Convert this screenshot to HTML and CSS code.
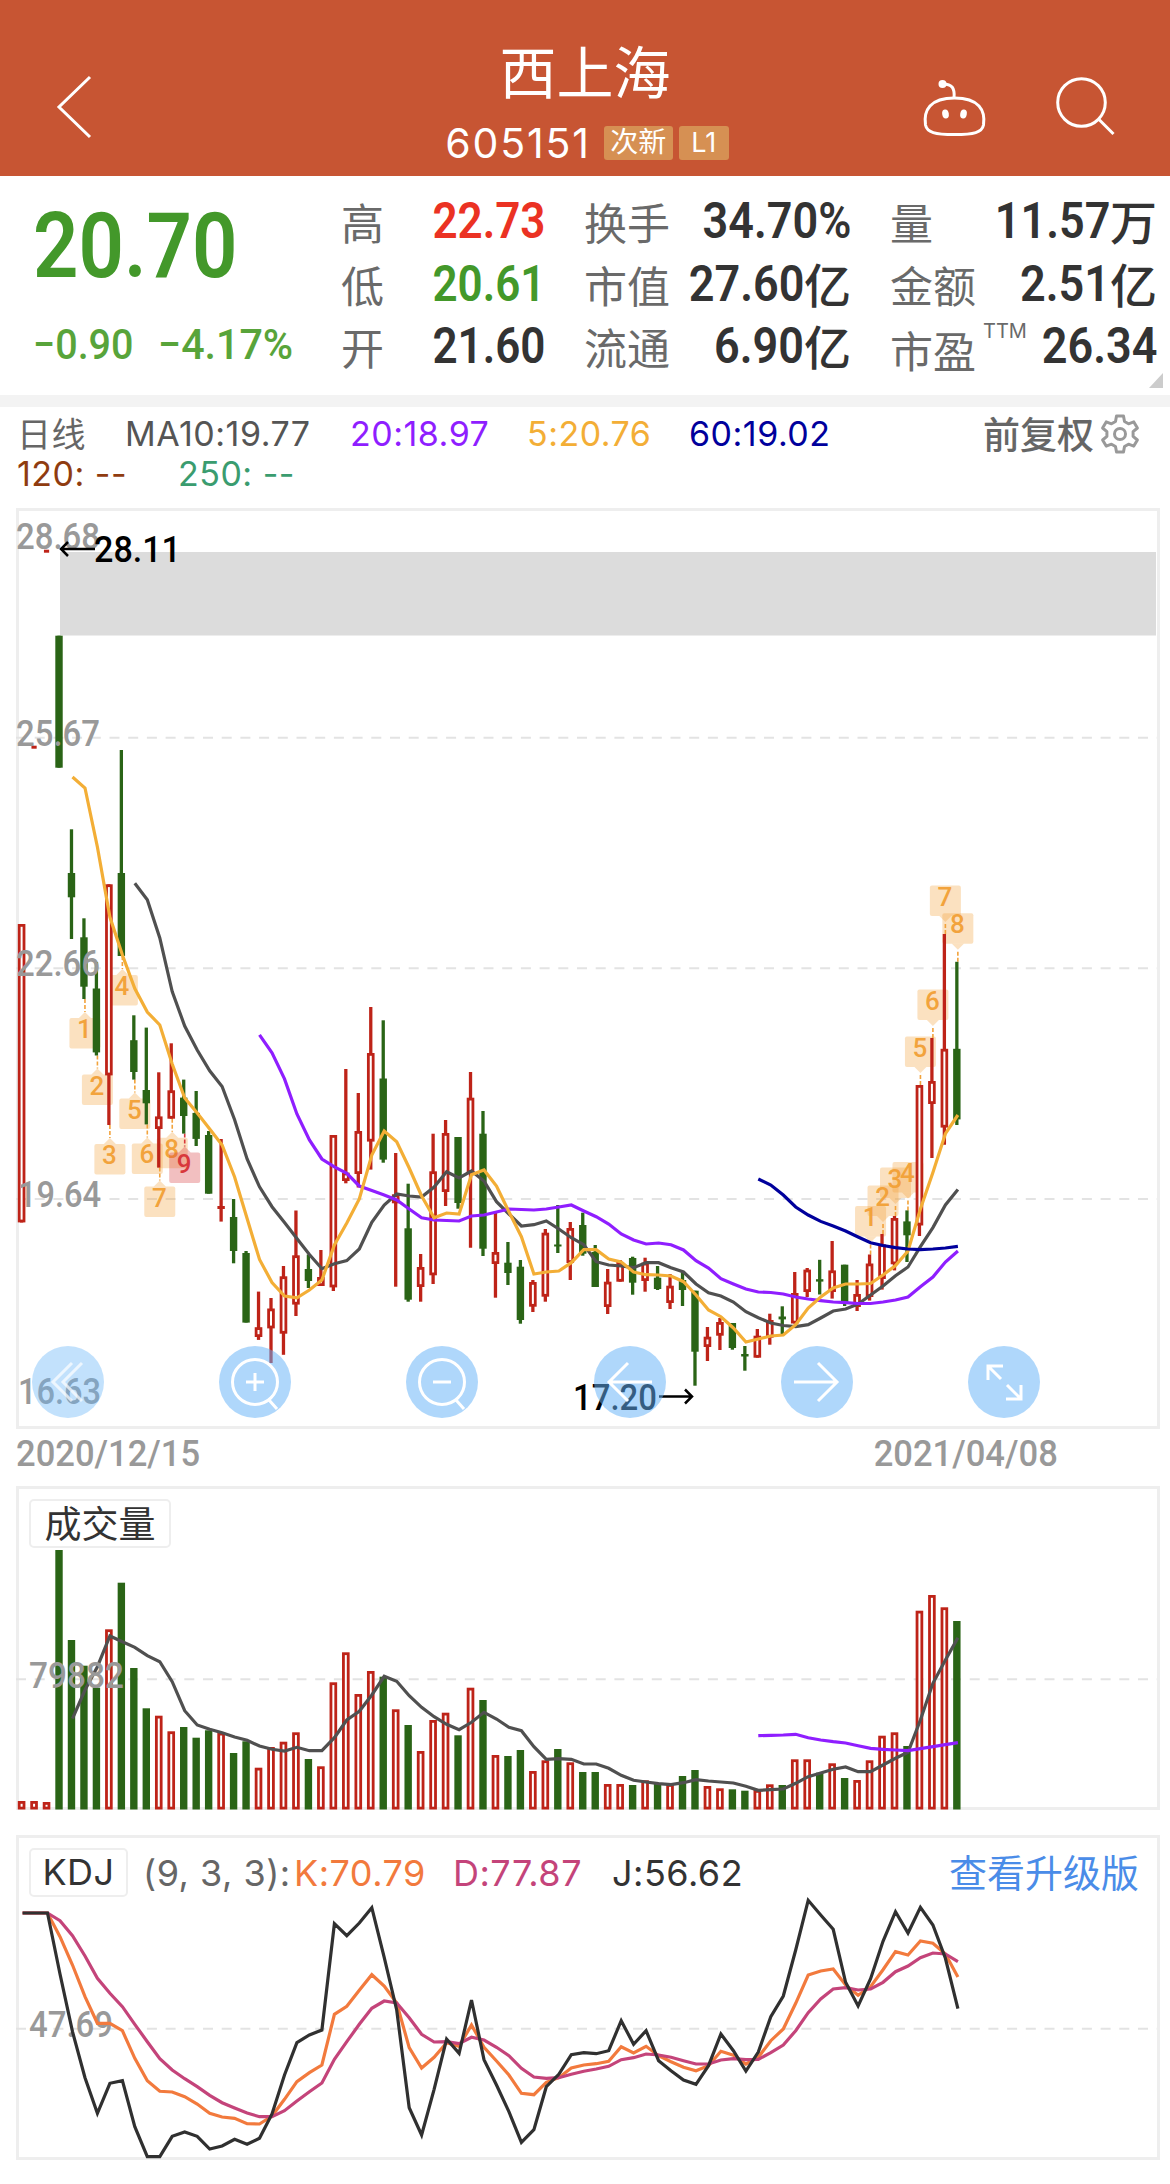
FILE: index.html
```html
<!DOCTYPE html>
<html lang="zh-CN">
<head>
    <meta charset="UTF-8">
    <meta name="viewport" content="width=device-width, initial-scale=1.0">
    <title>西上海 605151</title>
    <link rel="stylesheet" href="styles.css">
</head>
<body>
    <header class="header">
        <svg class="icon-back" width="40" height="68" viewBox="0 0 40 68"><path d="M35 4 L4 34 L35 64"/></svg>
        <div class="title">
            <h1>西上海</h1>
            <div class="code-row">
                <span class="code">605151</span>
                <span class="badge">次新</span>
                <span class="badge badge-l1">L1</span>
            </div>
        </div>
        <div class="header-icons">
            <svg width="66" height="60" viewBox="0 0 66 60">
                <path d="M32.500 22 C45 22 52 24.500 57 30 C61.500 35 62.500 42 61.500 49 C60 56.500 52 58.500 32.500 58.500 C13 58.500 5 56.500 3.500 49 C2.500 42 3.500 35 8 30 C13 24.500 20 22 32.500 22 Z"/>
                <path d="M32 22 C33 12 30 8 21 8"/>
                <circle class="solid" cx="20.500" cy="8" r="4"/>
                <ellipse class="solid" cx="23.500" cy="38" rx="3.300" ry="4.500" transform="rotate(-10 23.500 38)"/>
                <ellipse class="solid" cx="41.500" cy="38" rx="3.300" ry="4.500" transform="rotate(10 41.500 38)"/>
            </svg>
            <svg width="62" height="62" viewBox="0 0 62 62">
                <circle cx="27.500" cy="26.500" r="23.800"/>
                <path d="M44.500 43 L59.500 58"/>
            </svg>
        </div>
    </header>

    <section class="quote">
        <div class="price-box">
            <div class="price"><span>20.70</span></div>
            <div class="change"><span>−0.90</span><span>−4.17%</span></div>
        </div>
        <div class="col col-1">
            <div class="item"><label>高</label><b class="up">22.73</b></div>
            <div class="item"><label>低</label><b class="down">20.61</b></div>
            <div class="item"><label>开</label><b>21.60</b></div>
        </div>
        <div class="col col-2">
            <div class="item"><label>换手</label><b>34.70%</b></div>
            <div class="item"><label>市值</label><b>27.60</b><i>亿</i></div>
            <div class="item"><label>流通</label><b>6.90</b><i>亿</i></div>
        </div>
        <div class="col col-3">
            <div class="item"><label>量</label><b>11.57</b><i>万</i></div>
            <div class="item"><label>金额</label><b>2.51</b><i>亿</i></div>
            <div class="item"><label class="pe">市盈<sup>TTM</sup></label><b>26.34</b></div>
        </div>
        <span class="corner"></span>
    </section>

    <section class="ma">
        <div class="ma-row">
            <span class="period">日线</span>
            <span class="ma10">MA10:19.77</span>
            <span class="ma20">20:18.97</span>
            <span class="ma5">5:20.76</span>
            <span class="ma60">60:19.02</span>
            <span class="adjust">前复权</span>
            <svg class="gear" width="40" height="40" viewBox="0 0 40 40">
                <path d="M16.500 2 H23.500 L24.500 7.500 L28.500 9.800 L33.800 7.900 L37.400 14 L33.100 17.700 V22.300 L37.400 26 L33.800 32.100 L28.500 30.200 L24.500 32.500 L23.500 38 H16.500 L15.500 32.500 L11.500 30.200 L6.200 32.100 L2.600 26 L6.900 22.300 V17.700 L2.600 14 L6.200 7.900 L11.500 9.800 L15.500 7.500 Z"/>
                <circle cx="20" cy="20" r="5.500"/>
            </svg>
        </div>
        <div class="ma-row second">
            <span class="ma120">120: --</span>
            <span class="ma250">250: --</span>
        </div>
    </section>

    <section class="panel panel-k">
        <svg id="kChart" class="chart" width="1144" height="921" viewBox="16 508 1144 921"></svg>
        <div class="tools">
            <svg class="tool faded" viewBox="0 0 72 72"><circle cx="36" cy="36" r="36"/><path d="M50 17 L31 36 L50 55 M40 17 L21 36 L40 55" /></svg>
            <svg class="tool" viewBox="0 0 72 72"><circle cx="36" cy="36" r="36"/><path d="M27 36 H45 M36 27 V45 M50 54 L58 63"/><circle class="ring" cx="36" cy="36" r="22.500"/></svg>
            <svg class="tool" viewBox="0 0 72 72"><circle cx="36" cy="36" r="36"/><path d="M27 36 H45 M50 54 L58 63"/><circle class="ring" cx="36" cy="36" r="22.500"/></svg>
            <svg class="tool" viewBox="0 0 72 72"><circle cx="36" cy="36" r="36"/><path d="M34 17 L15 36 L34 55 M15 36 H58"/></svg>
            <svg class="tool" viewBox="0 0 72 72"><circle cx="36" cy="36" r="36"/><path d="M37 17 L56 36 L37 55 M13 36 H56"/></svg>
            <svg class="tool" viewBox="0 0 72 72"><circle cx="36" cy="36" r="36"/><path d="M20 34 V20 H35 M20 20 L33 33 M53 39 V53 H38 M53 53 L39 39"/></svg>
        </div>
    </section>
    <div class="dates"><span>2020/12/15</span><span>2021/04/08</span></div>

    <section class="panel panel-vol">
        <svg id="volChart" class="chart" width="1144" height="324" viewBox="16 1486 1144 324"></svg>
        <div class="bar"><span class="tag tag-vol">成交量</span></div>
    </section>

    <section class="panel panel-kdj">
        <svg id="kdjChart" class="chart" width="1144" height="325" viewBox="16 1835 1144 325"></svg>
        <div class="bar">
            <span class="tag tag-kdj">KDJ</span>
            <span class="args">(9, 3, 3):</span>
            <span class="k">K:70.79</span>
            <span class="d">D:77.87</span>
            <span class="j">J:56.62</span>
            <a class="upgrade">查看升级版</a>
        </div>
    </section>

    <script src="chart.js"></script>
</body>
</html>
```
FILE: styles.css
```css
:root {
    --header: #c75533;
    --line: #eeeeee;
    --cjk: "Noto Sans CJK SC", sans-serif;
}

* {
    box-sizing: border-box;
    margin: 0;
    padding: 0;
}

body {
    width: 1170px;
    height: 2184px;
    overflow: hidden;
    background: #fff;
    font-family: Inter, "Noto Sans CJK SC", sans-serif;
    color: #333;
}

svg {
    display: block;
}

/* header */
.header {
    height: 176px;
    background: var(--header);
    color: #fff;
    display: grid;
    grid-template-columns: 300px 1fr 300px;
    padding-top: 38px;
}

.header svg {
    fill: none;
    stroke: #fff;
    stroke-width: 3;
}

.header svg .solid {
    fill: #fff;
    stroke: none;
}

.icon-back {
    margin: 35px 0 0 55px;
}

.title {
    text-align: center;
}

.title h1 {
    font: 400 57px/72px var(--cjk);
    margin-top: -5px;
}

.code-row {
    display: flex;
    justify-content: center;
    align-items: center;
    margin-top: 19px;
    height: 38px;
    padding-left: 4px;
}

.code {
    font-size: 41px;
    line-height: 38px;
    letter-spacing: 1.8px;
    margin-right: 13px;
}

.badge {
    width: 69px;
    height: 34px;
    border-radius: 3px;
    background: #d69053;
    font-size: 28px;
    line-height: 33px;
    margin-right: 6px;
}

.badge-l1 {
    width: 50px;
    font-size: 27px;
    margin-right: 0;
}

.header-icons {
    display: flex;
    padding: 38px 0 0 52px;
    gap: 66px;
}

/* quote */
.quote {
    position: relative;
    height: 231px;
    border-bottom: 12px solid #f3f3f3;
    display: flex;
    font-family: Roboto, "Noto Sans CJK SC", sans-serif;
}

.price-box {
    width: 341px;
    padding: 22px 0 0 33px;
    color: #43982a;
}

.price span {
    display: inline-block;
    font-size: 91px;
    font-weight: 600;
    line-height: 96px;
    transform: scaleX(.875);
    transform-origin: left;
}

.change {
    display: flex;
    margin-top: 23px;
    font-size: 42px;
    font-weight: 500;
    line-height: 56px;
    color: #58a43a;
}

.change span {
    width: 125px;
    transform: scaleX(.94);
    transform-origin: left;
    white-space: nowrap;
}

.change span:last-child {
    transform: scaleX(.98);
}

.col {
    padding-top: 16px;
}

.col-1 {
    width: 204px;
    margin-right: 39px;
}

.col-2 {
    width: 267px;
    margin-right: 39px;
}

.col-3 {
    width: 267px;
}

.item {
    display: flex;
    align-items: center;
    height: 62.5px;
    white-space: nowrap;
}

.item label {
    flex: 1;
    position: relative;
    font: 400 43px/60px var(--cjk);
    color: #6a6a6a;
    margin-top: -4px;
}

.item b {
    font-size: 50px;
    font-weight: 600;
    line-height: 60px;
    transform: scaleX(.9);
    transform-origin: right;
    margin-top: -4px;
}

.col-1 .item b {
    transform: scaleX(.88);
}

.item i {
    font: 500 47px/60px var(--cjk);
    margin-top: -6px;
}

.item .up {
    color: #eb3223;
}

.item .down {
    color: #43982a;
}

.item .pe {
    padding-top: 6px;
}

.pe sup {
    position: absolute;
    left: 93px;
    top: 6px;
    font: 400 20px/24px Inter, sans-serif;
}

.corner {
    position: absolute;
    right: 7px;
    bottom: 7px;
    border-left: 14px solid transparent;
    border-bottom: 15px solid #ccc;
}

/* moving averages */
.ma {
    height: 101px;
    padding: 7px 0 0 17px;
    font-size: 34px;
}

.ma-row {
    display: grid;
    grid-template-columns: 108px 225px 177px 162px 294px 117px 40px;
    line-height: 40px;
    white-space: nowrap;
    align-items: center;
    letter-spacing: .5px;
}

.second {
    grid-template-columns: 161px 200px;
}

.period {
    font: 400 34px/38px var(--cjk);
    color: #666;
    margin-top: -2px;
}

.adjust {
    font: 500 37px/36px var(--cjk);
    color: #666;
    letter-spacing: 0;
    margin-top: -3px;
}

.ma10 { color: #555; }
.ma20 { color: #8f1eff; }
.ma5 { color: #f3ae36; }
.ma60 { color: #00009c; }
.ma120 { color: #8f3c10; }
.ma250 { color: #3a9c6f; }

.gear {
    fill: none;
    stroke: #999;
    stroke-width: 3;
    stroke-linejoin: round;
}

/* charts */
.panel {
    position: relative;
    width: 1144px;
    margin-left: 16px;
    border: 3px solid var(--line);
}

.panel-k {
    height: 921px;
}

.panel-vol {
    height: 324px;
}

.panel-kdj {
    height: 325px;
    margin-top: 25px;
}

.chart {
    margin: -3px;
    overflow: visible;
    font-family: Roboto, sans-serif;
    font-weight: 500;
}

.chart .grid {
    stroke: #e3e3e3;
    stroke-width: 2;
    stroke-dasharray: 10 8.7;
}

.chart .axis {
    fill: #999;
    font-size: 37px;
}

.chart .mark {
    fill: #000;
    font-size: 37px;
}

.chart .count {
    font-size: 26px;
    text-anchor: middle;
}

.tools {
    position: absolute;
    left: 13px;
    top: 835px;
    width: 1008px;
    display: flex;
    justify-content: space-between;
}

.tool {
    width: 72px;
    height: 72px;
    fill: none;
    stroke: #fff;
    stroke-width: 3;
}

.tool circle:first-child {
    fill: rgba(102, 179, 248, .52);
    stroke: none;
}

.tool.faded circle:first-child {
    fill: rgba(102, 179, 248, .4);
}

.tool.faded path {
    stroke: rgba(255, 255, 255, .7);
}

.dates {
    height: 57px;
    display: flex;
    justify-content: space-between;
    font: 500 36px/50px Roboto, sans-serif;
    color: #999;
    padding: 0 112px 0 16px;
}

.dates span {
    transform: scaleX(.96);
    transform-origin: left;
}

.dates span:last-child {
    transform-origin: right;
}

.bar {
    position: absolute;
    left: 10px;
    top: 10px;
    display: grid;
    grid-template-columns: 114px 151px 159px 159px 337px auto;
    align-items: center;
    font-size: 36px;
    line-height: 46px;
    letter-spacing: .5px;
    white-space: nowrap;
}

.tag {
    height: 49px;
    border: 2px solid var(--line);
    border-radius: 5px;
    background: #fff;
    text-align: center;
    line-height: 44px;
}

.tag-vol {
    width: 142px;
    font: 400 37px/42px var(--cjk);
    letter-spacing: 0;
}

.tag-kdj {
    width: 99px;
}

.args { color: #666; }
.k { color: #f27a3d; }
.d { color: #c4447a; }
.j { color: #333; }

.upgrade {
    font: 400 38px/44px var(--cjk);
    color: #4a8ce8;
    letter-spacing: 0;
    margin-top: -4px;
}
```
FILE: chart.js
```js
const X0 = 21.6;
const STEP = 12.47;
const UP = '#be2318';
const DOWN = '#2a6416';
const BASE = 1809.5;

// [方向, 最高, 实体上沿, 实体下沿, 最低]
const candles = [
    ['r', 924, 924, 1222.4, 1222.4], ['r', 745.7, 745.7, 748.7, 748.7], ['r', 549.7, 549.7, 552.7, 552.7],
    ['g', 635.7, 635.7, 767.7, 767.7], ['g', 829.3, 873, 897.3, 939], ['g', 918.3, 937.3, 986.7, 999],
    ['g', 962, 988.5, 1052.4, 1055.5], ['r', 884.3, 884.3, 1075.4, 1125], ['g', 750, 873, 956, 956],
    ['g', 1015.3, 1040.2, 1072, 1079.6], ['g', 1027.6, 1090, 1103.3, 1124.4], ['r', 1072.3, 1116.4, 1129, 1167.6],
    ['r', 1043.3, 1090.3, 1118.7, 1118.7], ['g', 1079.6, 1097.6, 1116, 1133.6], ['g', 1091, 1112.9, 1138.9, 1146],
    ['g', 1131, 1135, 1193.7, 1193.7], ['r', 1139, 1206, 1209, 1221.6], ['g', 1199, 1217, 1251, 1263.3],
    ['g', 1251, 1253, 1322.6, 1322.6], ['r', 1291.6, 1327.2, 1337, 1339.9], ['r', 1298, 1308.5, 1328.4, 1363],
    ['r', 1266, 1276.3, 1333.7, 1354.8], ['r', 1210.5, 1255.3, 1304.6, 1316], ['g', 1254.5, 1269, 1281, 1288],
    ['r', 1250, 1277, 1286, 1286], ['r', 1135, 1135, 1287.4, 1291], ['r', 1069, 1172.6, 1181, 1183.3],
    ['r', 1093, 1131, 1174, 1187.5], ['r', 1007, 1053, 1141.6, 1169.6], ['g', 1020.3, 1078.5, 1159.6, 1162.7],
    ['r', 1153, 1194.3, 1203.3, 1286.7], ['g', 1183.7, 1228.3, 1299.7, 1301.7], ['r', 1254, 1267, 1287, 1301.7],
    ['r', 1133.7, 1171.3, 1275.3, 1284], ['r', 1120, 1133, 1192, 1206], ['g', 1137, 1137, 1203, 1208.7],
    ['r', 1072, 1097.7, 1173, 1247.7], ['g', 1111, 1133.7, 1248.7, 1256], ['r', 1212, 1252, 1264, 1297.7],
    ['g', 1242, 1262.7, 1273, 1285], ['g', 1260, 1266.7, 1320, 1323.7], ['r', 1280, 1282, 1306.7, 1312],
    ['r', 1229, 1232.7, 1296.7, 1301.7], ['g', 1205, 1244.5, 1246.5, 1253], ['r', 1222, 1228, 1263, 1280],
    ['g', 1212.7, 1225, 1253.7, 1255.7], ['g', 1245, 1252, 1287, 1287], ['r', 1269, 1281.7, 1307, 1314],
    ['r', 1260, 1262, 1281.7, 1281.7], ['g', 1256.7, 1258, 1282.7, 1294.7], ['r', 1257.7, 1262.7, 1281, 1291.7],
    ['g', 1266, 1277.7, 1289, 1290], ['r', 1274, 1285.7, 1303, 1309], ['g', 1272, 1280, 1290, 1306],
    ['g', 1290.7, 1290.7, 1351.7, 1385.7], ['r', 1327, 1336.7, 1347, 1361], ['r', 1318, 1322, 1335.7, 1350],
    ['g', 1323, 1323, 1348, 1349.7], ['g', 1346, 1354, 1356.5, 1370.7], ['r', 1329, 1335.7, 1357.7, 1357.7],
    ['r', 1313.7, 1320, 1337.7, 1344.7], ['g', 1306.3, 1316.5, 1319.4, 1335], ['r', 1272, 1293, 1323.5, 1323.5],
    ['r', 1268, 1269.6, 1292, 1297], ['g', 1259.8, 1279.2, 1281.6, 1294.5], ['r', 1241, 1270.4, 1292, 1298.6],
    ['g', 1264.7, 1264.7, 1303, 1306], ['r', 1280, 1294, 1307, 1311], ['r', 1254.5, 1263.5, 1297, 1300.6],
    ['r', 1234, 1244.3, 1279, 1289.6], ['r', 1216, 1218, 1264.3, 1270.4], ['g', 1210.4, 1221.4, 1235.3, 1262],
    ['r', 1085, 1085, 1225.5, 1236], ['r', 1038, 1081, 1104, 1158], ['r', 934, 1048.8, 1127.6, 1144.7],
    ['g', 961.8, 1048.8, 1119.4, 1125]
];

const ma5 = [777, 788, 847, 917, 955, 988.5, 1012, 1025, 1064, 1098, 1113, 1129, 1145, 1177, 1218.5, 1259.5, 1282.5, 1296, 1297.8, 1290, 1280, 1245, 1223, 1199, 1155, 1131, 1141.7, 1168, 1196, 1217.7, 1213, 1214, 1174.7, 1170, 1186, 1211.7, 1236.7, 1274, 1272, 1271, 1262.7, 1249.7, 1249.7, 1259, 1262, 1272, 1274.7, 1275, 1276, 1281.7, 1295, 1310, 1316.7, 1328, 1342, 1339, 1336, 1335, 1324.7, 1308, 1297, 1288, 1284, 1284, 1283.5, 1275, 1265.5, 1251, 1209, 1172.5, 1133.7, 1115];
const ma10 = [883.3, 899.8, 938, 991.6, 1026, 1050, 1070.8, 1086.5, 1119.8, 1159, 1186.8, 1206.7, 1222.4, 1238.4, 1254.5, 1268.7, 1263.7, 1260.6, 1249, 1222.4, 1205, 1194, 1196, 1197, 1187, 1171.7, 1178, 1171, 1181, 1201.7, 1214, 1226, 1224.7, 1221, 1229, 1237.7, 1244.7, 1261.7, 1265, 1266, 1267.7, 1262.7, 1262.7, 1267.7, 1272, 1284, 1292.7, 1296, 1302, 1311.7, 1317.7, 1323, 1325.5, 1326.7, 1324.7, 1318, 1311, 1309, 1304, 1295, 1286, 1275.7, 1267, 1246.7, 1227.6, 1205, 1189.6];
const ma20 = [1034.8, 1052.8, 1078.9, 1114, 1140, 1159, 1166.9, 1173.4, 1186, 1190.6, 1195, 1200, 1209, 1217.7, 1220, 1220.5, 1221, 1216, 1215, 1212, 1209, 1209.5, 1210, 1209, 1207, 1205, 1211, 1216.7, 1224, 1234, 1240, 1244, 1243, 1244.7, 1250, 1260.7, 1268, 1278.7, 1284, 1289, 1292, 1292.5, 1294, 1297, 1299, 1300.6, 1302, 1302.6, 1303.5, 1303.5, 1302, 1300, 1297, 1286.7, 1277, 1262, 1251];
const ma60 = [1179, 1185, 1195, 1207, 1215, 1221.4, 1226, 1231, 1237, 1242.7, 1245.5, 1247.6, 1249, 1249.6, 1249, 1248, 1246.3];

const volTops = [1801, 1801, 1802, 1550, 1640, 1665.7, 1687.7, 1629.3, 1582.7, 1668, 1708.3, 1715.7, 1731.3, 1727, 1737.7, 1730.3, 1732.7, 1753, 1741.3, 1767.7, 1747, 1741.7, 1732.3, 1759, 1766.3, 1682.3, 1652.3, 1694, 1671, 1676.7, 1709.3, 1725, 1751, 1720, 1712.7, 1735.3, 1687.7, 1700, 1755, 1756, 1750, 1771, 1760.3, 1749, 1762.3, 1772, 1772, 1784, 1784, 1785, 1780.3, 1783, 1784, 1776, 1770, 1786, 1788.3, 1789.3, 1790.7, 1790, 1784.3, 1785, 1759.3, 1759.3, 1772.7, 1763.3, 1778, 1780, 1760.3, 1735.7, 1732.3, 1746, 1610.7, 1595, 1607.3, 1621];
const volMa5 = [1718.7, 1690, 1666.7, 1636, 1641.7, 1647.3, 1655.7, 1661.7, 1681.7, 1710.7, 1725, 1729.3, 1732.7, 1737, 1740.3, 1746, 1749.3, 1751, 1747.3, 1750.7, 1750.7, 1737.7, 1720, 1711.3, 1695, 1676.3, 1681.3, 1695.7, 1707.3, 1716.7, 1724.3, 1729.7, 1722.3, 1712.3, 1719, 1727.3, 1730.7, 1746.7, 1759.3, 1758.7, 1759.3, 1764, 1764, 1768.3, 1775.3, 1780.3, 1782, 1783.7, 1784.7, 1782.7, 1779.7, 1781, 1782, 1783, 1786.3, 1790.3, 1789.7, 1789, 1783.3, 1776.7, 1773, 1769.3, 1767, 1771.7, 1771.7, 1765, 1758.3, 1752.3, 1720, 1683.3, 1660, 1637.7];
const volMa60 = [1735.7, 1735.3, 1735, 1734.3, 1737.7, 1740, 1741.7, 1743, 1745.7, 1748.3, 1749.3, 1750, 1750.7, 1748.7, 1746.7, 1744.7, 1742.7];

const kLine = [1913, 1913, 1913, 1936.7, 1965, 1996.7, 2023.3, 2023.3, 2030.7, 2058.3, 2080.7, 2091.3, 2092, 2096.7, 2104, 2113.3, 2117, 2118.3, 2123.7, 2124, 2116, 2099.3, 2081.7, 2072.7, 2065, 2014.3, 2006.3, 1990.3, 1974.7, 1986, 2003, 2047.7, 2068, 2057.3, 2042.7, 2046.3, 2025, 2047.3, 2061, 2075, 2093.3, 2094.7, 2082.3, 2077.7, 2068, 2065, 2063.7, 2061.3, 2046.7, 2053, 2046.3, 2055.7, 2061.7, 2067.3, 2070.7, 2065.7, 2051.3, 2055.3, 2064, 2057.3, 2040.7, 2029, 2003.3, 1975, 1971, 1969, 1985, 1995.3, 1986.7, 1969.7, 1951.7, 1955, 1941, 1943.3, 1954, 1977];
const dLine = [1913, 1913, 1913, 1920.7, 1935.7, 1956, 1978.3, 1993.3, 2006.7, 2024.3, 2041.7, 2058.7, 2070, 2078.7, 2086.7, 2095.3, 2102.7, 2108, 2113, 2116.7, 2116.7, 2110.7, 2101, 2091.7, 2083, 2059.3, 2041.7, 2024.3, 2008.3, 2001, 2003, 2017.7, 2034.3, 2042, 2041.7, 2043.7, 2037.3, 2040, 2047.3, 2055.7, 2068.3, 2077, 2078.3, 2077.7, 2074.3, 2071.3, 2069, 2066.3, 2059.7, 2057.7, 2054, 2055, 2057.3, 2060.7, 2064, 2064, 2060, 2058.7, 2059.7, 2059.3, 2052.7, 2045, 2030.7, 2012.7, 1999, 1989, 1987.7, 1990, 1989, 1982.3, 1971.7, 1966, 1957.7, 1953, 1954, 1961.7];
const jLine = [1913, 1913, 1913, 1974, 2031.7, 2077.7, 2113.3, 2083.3, 2080.7, 2126.7, 2156.7, 2156.7, 2136.3, 2132, 2136.3, 2149, 2146, 2139.3, 2144.3, 2138.3, 2114, 2075, 2042.7, 2035, 2030, 1923.7, 1935.7, 1923, 1907.7, 1957.3, 2010, 2107.7, 2135, 2089.3, 2039, 2053.3, 2000, 2059.7, 2085, 2111.7, 2142.3, 2129.7, 2086.7, 2074.3, 2054.7, 2052.7, 2053.7, 2050.7, 2020.7, 2044.3, 2030.7, 2060.7, 2070.7, 2080, 2084.3, 2065.7, 2034, 2050.7, 2071, 2052, 2016.7, 1996, 1950, 1900.3, 1915, 1929.3, 1982.3, 2006, 1978.7, 1941.3, 1911.7, 1933, 1907.3, 1925, 1958.3, 2008.7];

const cx = i => X0 + i * STEP;

function polyline(data, start, color, width = 3.2) {
    const points = data.map((y, i) => `${(cx(start + i) + 1).toFixed(1)},${y}`).join(' ');
    return `<polyline points="${points}" fill="none" stroke="${color}" stroke-width="${width}"/>`;
}

function grid(y) {
    return `<line class="grid" x1="16" x2="1157" y1="${y}" y2="${y}"/>`;
}

function text(cls, x, y, width, value) {
    return `<text class="${cls}" x="${x}" y="${y}" textLength="${width}" lengthAdjust="spacingAndGlyphs">${value}</text>`;
}

function body(type, x, top, bottom) {
    if (type === 'g' || bottom - top < 4) {
        return `<rect x="${x - 3.7}" y="${top}" width="7.4" height="${bottom - top}" fill="${type === 'g' ? DOWN : UP}"/>`;
    }
    return `<rect x="${x - 2.4}" y="${top + 1.4}" width="4.8" height="${bottom - top - 2.8}" fill="#fff" stroke="${UP}" stroke-width="2.8"/>`;
}

// 九转序列标记
function counter(i, n, below) {
    const x = cx(i) + 1;
    const y = below ? candles[i][4] : candles[i][1];
    const color = n === 9 ? '#d8383c' : '#f2a33c';
    const top = below ? y + 19 : y - 48.5;
    const tip = below
        ? `M${x - 6} ${top} L${x} ${top - 6} L${x + 6} ${top} Z`
        : `M${x - 6} ${top + 30.5} L${x} ${top + 36.5} L${x + 6} ${top + 30.5} Z`;
    const end = below ? top - 6 : top + 36.5;
    return `<rect x="${x - 15.5}" y="${top}" width="31" height="30.5" rx="2" fill="${color}" opacity=".32"/>
        <path d="${tip}" fill="${color}" opacity=".32"/>
        <line x1="${x}" x2="${x}" y1="${y}" y2="${end}" stroke="${color}" stroke-width="1.6" stroke-dasharray="4 2"/>
        <text class="count" x="${x - 0.5}" y="${top + 20}" fill="${color}">${n}</text>`;
}

function drawK() {
    let html = `<rect x="60" y="552" width="1096" height="83.500" fill="#dcdcdc"/>`;
    html += grid(737.7) + grid(968.3) + grid(1199);
    for (let n = 1; n <= 9; n++) html += counter(n + 4, n, true);
    for (let n = 1; n <= 8; n++) html += counter(n + 67, n, false);
    candles.forEach(([type, high, top, bottom, low], i) => {
        const x = cx(i);
        if (i === 1 || i === 2) {
            html += `<rect x="${x - 2.6}" y="${top}" width="5.2" height="3" fill="${UP}"/>`;
            return;
        }
        html += `<line x1="${x}" x2="${x}" y1="${high}" y2="${low}" stroke="${type === 'g' ? DOWN : UP}" stroke-width="3.3"/>`;
        html += body(type, x, top, bottom);
    });
    html += polyline(ma10, 9, '#505050') + polyline(ma20, 19, '#8f1eff') + polyline(ma5, 4, '#f3ae36') + polyline(ma60, 59, '#00009c');
    html += text('axis', 16, 549, 84, '28.68') + text('axis', 16, 746, 84, '25.67') + text('axis', 16, 976, 84, '22.66')
        + text('axis', 18, 1207, 83, '19.64') + text('axis', 18, 1404, 83, '16.63');
    html += text('mark', 94, 562, 87, '28.11') + text('mark', 573, 1410, 84, '17.20');
    html += `<path d="M95 549 H61 M68 542 L61 549 L68 556 M659 1396.500 H692 M685 1389.500 L692 1396.500 L685 1403.500" fill="none" stroke="#000" stroke-width="2.500"/>`;
    document.getElementById('kChart').innerHTML = html;
}

function drawVol() {
    let html = grid(1679.3);
    volTops.forEach((top, i) => {
        html += body(candles[i][0], cx(i), top, BASE);
    });
    html += polyline(volMa5, 4, '#505050') + polyline(volMa60, 59, '#8f1eff');
    html += text('axis', 29, 1688, 95, '79882');
    document.getElementById('volChart').innerHTML = html;
}

function drawKdj() {
    let html = grid(2028.7) + text('axis', 29, 2037, 84, '47.69');
    html += polyline(kLine, 0, '#f27a3d') + polyline(dLine, 0, '#c4447a') + polyline(jLine, 0, '#303030');
    document.getElementById('kdjChart').innerHTML = html;
}

drawK();
drawVol();
drawKdj();
```
